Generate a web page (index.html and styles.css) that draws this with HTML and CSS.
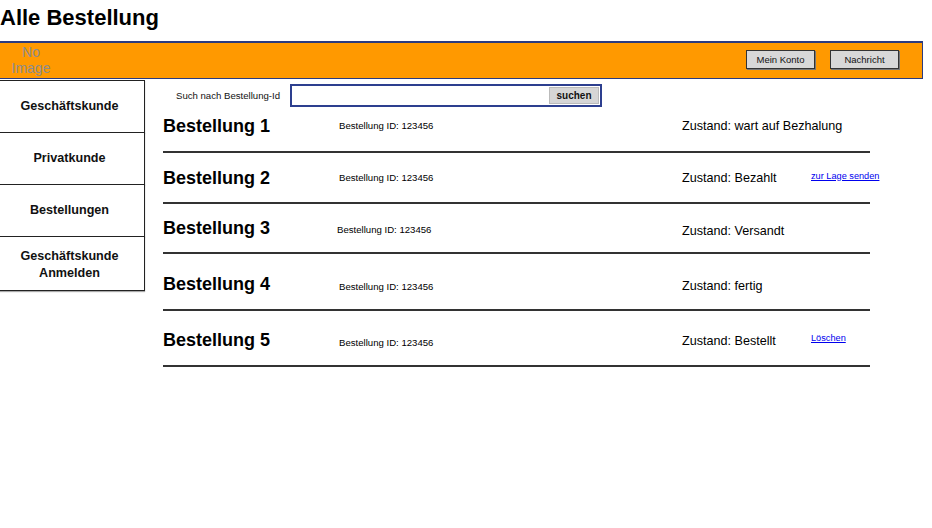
FILE: index.html
```html
<!DOCTYPE html>
<html lang="de">
<head>
<meta charset="utf-8">
<title>Alle Bestellung</title>
<link rel="stylesheet" href="styles.css">
</head>
<body>
<h1 class="page-title">Alle Bestellung</h1>
<header class="topbar">
  <div class="logo">No<br>Image</div>
  <div class="topbar-actions">
    <button class="btn">Mein Konto</button>
    <button class="btn">Nachricht</button>
  </div>
</header>
<div class="layout">
  <nav class="sidebar">
    <a class="nav-item">Geschäftskunde</a>
    <a class="nav-item">Privatkunde</a>
    <a class="nav-item">Bestellungen</a>
    <a class="nav-item">Geschäftskunde<br>Anmelden</a>
  </nav>
  <main class="content">
    <div class="search">
      <label class="search-label">Such nach Bestellung-Id</label>
      <div class="search-box">
        <input class="search-input" type="text">
        <button class="search-btn">suchen</button>
      </div>
    </div>
    <div class="order">
      <div class="order-title">Bestellung 1</div>
      <div class="order-id">Bestellung ID: 123456</div>
      <div class="order-state">Zustand: wart auf Bezhalung</div>
      <div class="order-link"></div>
    </div>
    <div class="order">
      <div class="order-title">Bestellung 2</div>
      <div class="order-id">Bestellung ID: 123456</div>
      <div class="order-state">Zustand: Bezahlt</div>
      <div class="order-link"><a href="#">zur Lage senden</a></div>
    </div>
    <div class="order">
      <div class="order-title">Bestellung 3</div>
      <div class="order-id">Bestellung ID: 123456</div>
      <div class="order-state">Zustand: Versandt</div>
      <div class="order-link"></div>
    </div>
    <div class="order">
      <div class="order-title">Bestellung 4</div>
      <div class="order-id">Bestellung ID: 123456</div>
      <div class="order-state">Zustand: fertig</div>
      <div class="order-link"></div>
    </div>
    <div class="order">
      <div class="order-title">Bestellung 5</div>
      <div class="order-id">Bestellung ID: 123456</div>
      <div class="order-state">Zustand: Bestellt</div>
      <div class="order-link"><a href="#">Löschen</a></div>
    </div>
  </main>
</div>
</body>
</html>
```
FILE: styles.css
```css
html, body {
  margin: 0;
  padding: 0;
  background: #fff;
  font-family: "Liberation Sans", Arial, sans-serif;
  color: #000;
}

.page-title {
  margin: 0;
  height: 41px;
  padding-top: 5px;
  box-sizing: border-box;
  font-size: 22px;
  line-height: 25px;
  font-weight: bold;
}

.topbar {
  width: 923px;
  height: 38px;
  box-sizing: border-box;
  background: #ff9900;
  border-top: 2px solid #2b3b7f;
  border-bottom: 1px solid #2b3b7f;
  border-right: 1px solid #2b3b7f;
  display: flex;
  align-items: center;
  justify-content: space-between;
}

.logo {
  width: 62px;
  text-align: center;
  color: #8c8c8c;
  font-size: 14px;
  line-height: 16px;
  font-weight: normal;
  margin-top: -2px;
}

.topbar-actions {
  display: flex;
  gap: 15px;
  padding-right: 23px;
  margin-top: -2px;
}

.btn {
  width: 69px;
  height: 19px;
  padding: 0;
  background: #d8d8d8;
  border: 1px solid #333;
  box-shadow: 1px 1px 0 #777;
  font-family: "Liberation Sans", Arial, sans-serif;
  font-size: 9.5px;
  color: #111;
}

.layout {
  display: flex;
  align-items: flex-start;
  gap: 18px;
}

.sidebar {
  width: 153px;
  margin-left: -8px;
  margin-top: 1px;
  display: flex;
  flex-direction: column;
}

.nav-item {
  height: 53px;
  box-sizing: border-box;
  border: 1px solid #222;
  margin-top: -1px;
  background: #fff;
  display: flex;
  align-items: center;
  justify-content: center;
  text-align: center;
  font-size: 12.6px;
  line-height: 17px;
  font-weight: bold;
  color: #111;
  box-shadow: 0 1px 1px #aaa;
  padding-left: 2px;
}

.nav-item:first-child {
  margin-top: 0;
}

.nav-item:last-child {
  height: 55px;
  padding-top: 2px;
}

.content {
  width: 707px;
  padding-top: 5px;
}

.search {
  display: flex;
  align-items: center;
  height: 23px;
  padding-left: 13px;
}

.search-label {
  width: 114px;
  font-size: 9.6px;
  color: #111;
}

.search-box {
  width: 312px;
  height: 23px;
  box-sizing: border-box;
  border: 2px solid #2d3f8f;
  display: flex;
  align-items: center;
  padding: 0 1px 0 0;
}

.search-input {
  flex: 1;
  border: none;
  outline: none;
  height: 17px;
  padding: 0;
  background: #fff;
}

.search-btn {
  width: 50px;
  height: 17px;
  padding: 0;
  background: #d6d6d6;
  border: 1px solid #bbb;
  font-family: "Liberation Sans", Arial, sans-serif;
  font-size: 10px;
  font-weight: bold;
  color: #111;
}

.order {
  display: grid;
  grid-template-columns: 176px 343px 129px 1fr;
  align-items: center;
  box-sizing: border-box;
  border-bottom: 2px solid #333;
}

.order:nth-child(2) { height: 46px; padding-bottom: 6px; }
.order:nth-child(3) { height: 51px; padding-bottom: 0; }
.order:nth-child(4) { height: 50px; padding-bottom: 0; }
.order:nth-child(5) { height: 57px; padding-bottom: 0; padding-top: 4px; }
.order:nth-child(6) { height: 56px; padding-bottom: 0; padding-top: 4px; }

.order-title {
  font-size: 18px;
  font-weight: bold;
  line-height: 20px;
}

.order-id {
  font-size: 9.6px;
  line-height: 12px;
}

.order:nth-child(4) .order-id { margin-left: -2px; margin-top: 4px; }
.order:nth-child(5) .order-id { margin-top: 7px; }
.order:nth-child(6) .order-id { margin-top: 6px; }
.order:nth-child(4) .order-state { margin-top: 6px; }
.order:nth-child(5) .order-state { margin-top: 4px; }
.order:nth-child(6) .order-state { margin-top: 2px; }

.order-state {
  font-size: 12.6px;
  line-height: 16px;
  white-space: nowrap;
}

.order-link {
  font-size: 9.2px;
  line-height: 12px;
  margin-top: -4px;
  white-space: nowrap;
}

.order-link a {
  color: #0000ee;
  text-decoration: underline;
}
```
